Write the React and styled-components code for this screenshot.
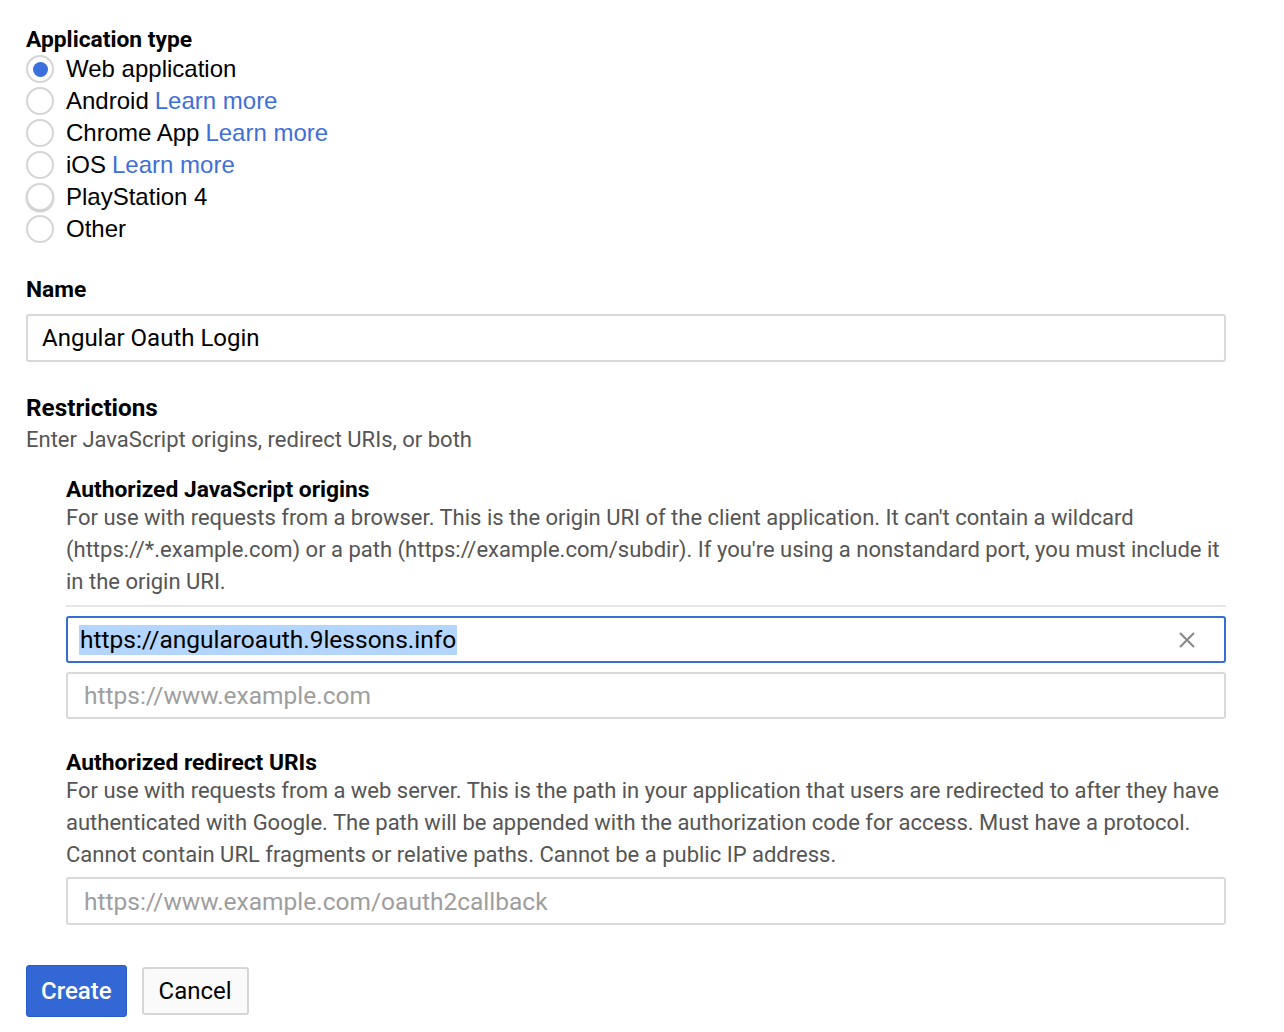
import React from "react";
import styled, { createGlobalStyle } from "styled-components";

const Global = createGlobalStyle`
  html, body { margin: 0; padding: 0; background: #fff; }
  body { font-family: Roboto, "Liberation Sans", Arial, sans-serif; color: #000; }
`;

const Page = styled.div`
  padding: 27px 0 0 26px;
  width: 1200px;
`;

const Section = styled.section`
  margin-top: ${(p) => p.$mt || 0}px;
`;

const Heading = styled.div`
  font-family: Roboto, sans-serif;
  font-weight: 700;
  font-size: ${(p) => p.$size || 22.8}px;
  line-height: ${(p) => p.$lh || 26}px;
  color: #000;
`;

const RadioList = styled.div`
  display: flex;
  flex-direction: column;
`;

const RadioRow = styled.label`
  display: flex;
  align-items: center;
  height: 32px;
  gap: 12px;
  font-family: "Liberation Sans", Arial, sans-serif;
  font-size: 24px;
  color: #000;
`;

const RadioCircle = styled.span`
  box-sizing: border-box;
  width: 28px;
  height: 28px;
  border-radius: 50%;
  border: 2px solid #d6d6d6;
  background: #fff;
  display: flex;
  align-items: center;
  justify-content: center;
  flex: none;
  box-shadow: ${(p) => (p.$shadow ? "0 1px 2px rgba(0,0,0,0.28)" : "none")};
  &::after {
    content: "";
    display: ${(p) => (p.$checked ? "block" : "none")};
    width: 15px;
    height: 15px;
    border-radius: 50%;
    background: #3b6fdb;
  }
`;

const Link = styled.a`
  color: #3f6fd8;
  text-decoration: none;
  margin-left: 6px;
`;

const TextInput = styled.div`
  box-sizing: border-box;
  display: flex;
  align-items: center;
  margin-top: ${(p) => p.$mt || 0}px;
  height: ${(p) => p.$h || 47}px;
  border: ${(p) => (p.$focused ? "2px solid #3a6cd6" : "2px solid #d9d9d9")};
  border-radius: 3px;
  padding: 0 14px 0 ${(p) => (p.$focused ? 11 : p.$name ? 14 : 16)}px;
  font-family: Roboto, sans-serif;
  font-size: ${(p) => (p.$name ? 24 : 24.5)}px;
  color: ${(p) => (p.$placeholder ? "#9e9e9e" : "#000")};
  background: #fff;
`;

const Selected = styled.span`
  background: #b4d5fd;
  padding: 0 1px;
  line-height: 30px;
`;

const Grow = styled.span`
  flex: 1;
`;

const ClearIcon = styled.svg`
  width: 18px;
  height: 18px;
  margin-right: 14px;
`;

const SubText = styled.div`
  font-family: Roboto, sans-serif;
  font-size: 22px;
  line-height: 32px;
  color: #555;
`;

const Indent = styled.div`
  padding-left: 40px;
`;

const Divider = styled.div`
  height: 2px;
  background: #e6e6e6;
  margin: 7px 0 9px;
`;

const InputStack = styled.div`
  display: flex;
  flex-direction: column;
  gap: 9px;
`;

const Buttons = styled.div`
  display: flex;
  align-items: center;
  gap: 15px;
  margin-top: 40px;
`;

const Button = styled.button`
  box-sizing: border-box;
  height: ${(p) => (p.$primary ? 52 : 48)}px;
  padding: 0 ${(p) => (p.$primary ? 14 : 15)}px;
  border-radius: 3px;
  font-family: Roboto, sans-serif;
  font-size: 24px;
  font-weight: ${(p) => (p.$primary ? 500 : 400)};
  color: ${(p) => (p.$primary ? "#fff" : "#000")};
  background: ${(p) => (p.$primary ? "#3367d6" : "#fafafa")};
  border: ${(p) => (p.$primary ? "1px solid #2a5bc7" : "2px solid #d6d6d6")};
  cursor: pointer;
`;

const types = [
  { label: "Web application", checked: true },
  { label: "Android", link: true },
  { label: "Chrome App", link: true },
  { label: "iOS", link: true },
  { label: "PlayStation 4", shadow: true },
  { label: "Other" },
];

export default function App() {
  return (
    <>
      <Global />
      <Page>
        <Section>
          <Heading>Application type</Heading>
          <RadioList>
            {types.map((t) => (
              <RadioRow key={t.label}>
                <RadioCircle $checked={t.checked} $shadow={t.shadow} />
                <span>
                  {t.label}
                  {t.link && <Link href="#">Learn more</Link>}
                </span>
              </RadioRow>
            ))}
          </RadioList>
        </Section>

        <Section $mt={32}>
          <Heading>Name</Heading>
          <TextInput $name $h={48} $mt={11}>Angular Oauth Login</TextInput>
        </Section>

        <Section $mt={30}>
          <Heading $size={24.3} $lh={32}>Restrictions</Heading>
          <SubText>Enter JavaScript origins, redirect URIs, or both</SubText>
        </Section>

        <Indent>
          <Section $mt={22}>
            <Heading $lh={24}>Authorized JavaScript origins</Heading>
            <SubText>
              For use with requests from a browser. This is the origin URI of the client application. It can't contain a wildcard (https://*.example.com) or a path (https://example.com/subdir). If you're using a nonstandard port, you must include it in the origin URI.
            </SubText>
            <Divider />
            <InputStack>
              <TextInput $focused>
                <Selected>https://angularoauth.9lessons.info</Selected>
                <Grow />
                <ClearIcon viewBox="0 0 18 18">
                  <path d="M2 2 L16 16 M16 2 L2 16" stroke="#8a8a8a" strokeWidth="2.2" />
                </ClearIcon>
              </TextInput>
              <TextInput $placeholder>https://www.example.com</TextInput>
            </InputStack>
          </Section>

          <Section $mt={32}>
            <Heading $lh={24}>Authorized redirect URIs</Heading>
            <SubText>
              For use with requests from a web server. This is the path in your application that users are redirected to after they have authenticated with Google. The path will be appended with the authorization code for access. Must have a protocol. Cannot contain URL fragments or relative paths. Cannot be a public IP address.
            </SubText>
            <TextInput $placeholder $h={48} $mt={6}>https://www.example.com/oauth2callback</TextInput>
          </Section>
        </Indent>

        <Buttons>
          <Button $primary>Create</Button>
          <Button>Cancel</Button>
        </Buttons>
      </Page>
    </>
  );
}
